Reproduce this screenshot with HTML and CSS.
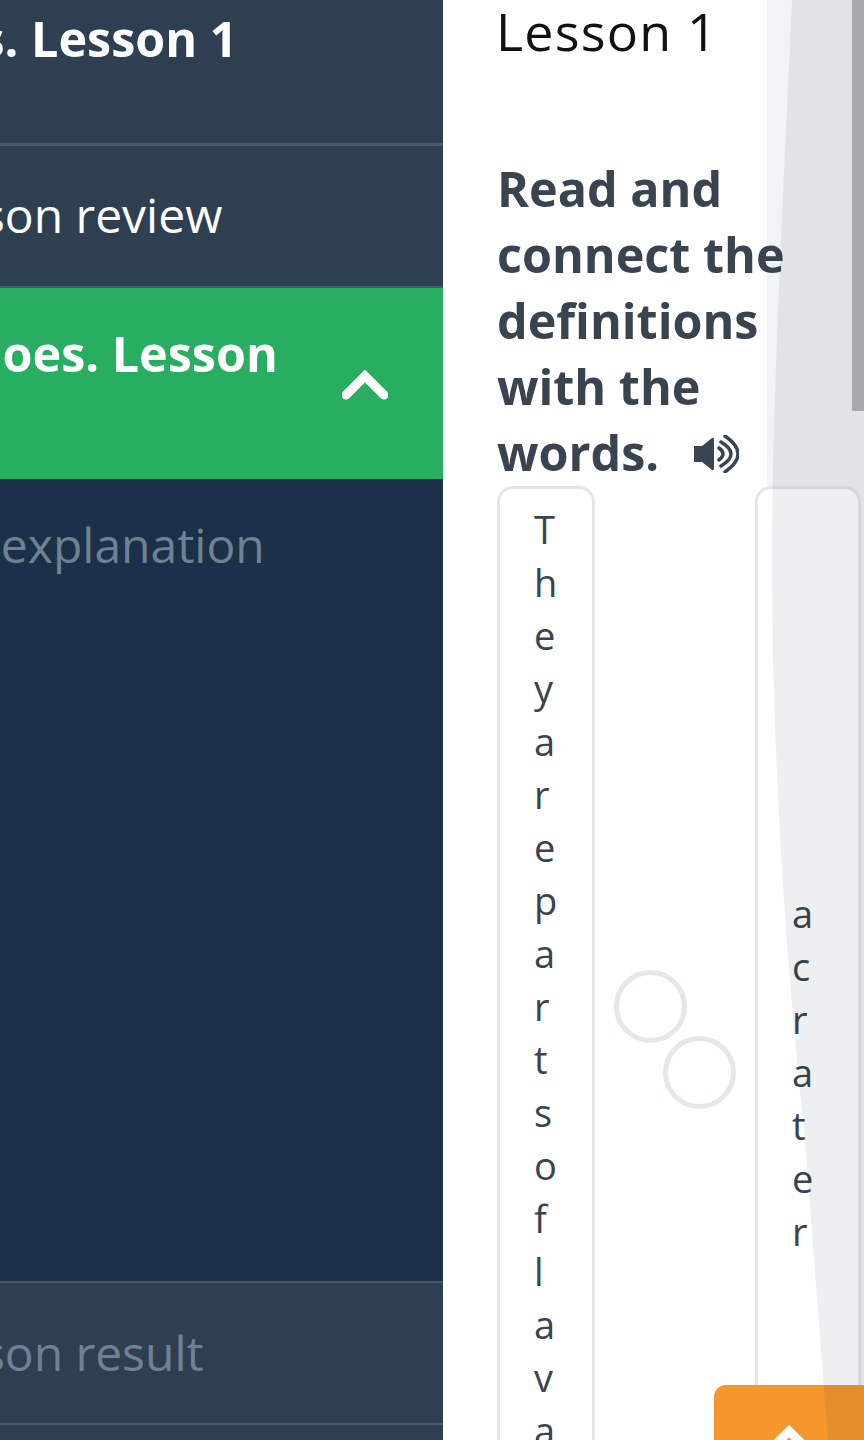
FILE: index.html
```html
<!DOCTYPE html>
<html lang="en">
  <head>
    <meta charset="UTF-8" />
    <title>Heroes. Lesson 1</title>
    <link rel="stylesheet" href="styles.css">
  </head>
  <body>
    <div class="page">
      <nav class="side">
        <div class="side-title"><span>Heroes. Lesson 1</span></div>
        <div class="side-row"><span>Lesson review</span></div>
        <div class="side-active">
          <span>Volcanoes. Lesson 1</span>
          <svg class="side-caret" width="46" height="30" viewBox="0 0 46 30">
            <path d="M4 25 L23 6 L42 25" />
          </svg>
        </div>
        <div class="side-sub">
          <span class="side-sub-link">Theory explanation</span>
        </div>
        <div class="side-row side-row-off"><span>Lesson result</span></div>
        <div class="side-row side-row-last"></div>
      </nav>
      <main class="content">
        <h1 class="lesson-title">Lesson 1</h1>
        <h2 class="task-title">
          Read and connect the definitions with the words.
          <svg class="sound-icon" width="46" height="38" viewBox="0 0 46 38">
            <path class="sound-body" d="M1 11 H9 L19 3 Q21 2 21 5 V33 Q21 36 19 35 L9 27 H1 Z" />
            <path class="sound-wave" d="M26 13 Q34 19 26 25 M28 7 Q48 19 28 31 M32 1 Q58 19 32 37" />
          </svg>
        </h2>
        <div class="match">
          <div class="match-card match-left">They are parts of lava that fly out</div>
          <div class="match-dots">
            <span class="dot dot-a"></span>
            <span class="dot dot-b"></span>
          </div>
          <div class="match-card match-right">a crater</div>
        </div>
      </main>
      <div class="up-btn">
        <svg width="46" height="30" viewBox="0 0 46 30">
          <path d="M4 25 L23 6 L42 25" />
        </svg>
      </div>
      <!-- soft grey shape lying over the right edge -->
      <svg class="shade" width="98" height="1440" viewBox="0 0 98 1440">
        <path d="M26 0 C18 180 6 400 6 560 C6 760 20 960 38 1130 C46 1230 54 1340 62 1440 H98 V0 Z" />
      </svg>
      <div class="scroll-thumb"></div>
    </div>
  </body>
</html>
```

FILE: styles.css
```css
html,
body {
  margin: 0;
  height: 1440px;
  overflow: hidden;
}
.page {
  position: relative;
  display: flex;
  height: 1440px;
  overflow: hidden;
  background: #f0f4f6;
  font-family: "Open Sans", "Liberation Sans", sans-serif;
}
.side {
  display: flex;
  flex-direction: column;
  flex: none;
  width: 443px;
  overflow: hidden;
  background: #1c3049;
  font-size: 48px;
  line-height: 66px;
}
.side span {
  white-space: nowrap;
}
.side-title {
  height: 143px;
  background: #2f3f52;
  border-bottom: 3px solid #46596b;
  color: #fff;
  font-size: 48.5px;
  font-weight: 700;
}
.side-title span {
  display: block;
  margin-left: -166px;
  margin-top: 5px;
}
.side-row {
  display: flex;
  align-items: center;
  height: 140px;
  background: #2f3f52;
  border-bottom: 2px solid #46596b;
  color: #fff;
}
.side-row span {
  margin-left: -93px;
  margin-top: -3px;
}
.side-row-off {
  color: #6f8293;
  border-top: 2px solid #46596b;
}
.side-row-off span {
  margin-top: -1px;
}
.side-row-last {
  flex: 1;
  border-bottom: 0;
}
.side-active {
  display: flex;
  align-items: center;
  justify-content: space-between;
  box-sizing: border-box;
  height: 191px;
  padding-right: 55px;
  background: #27ae60;
  color: #fff;
  font-size: 48.5px;
  font-weight: 700;
}
.side-active span {
  display: block;
  width: 470px;
  margin-left: -160px;
  margin-top: 5px;
  white-space: normal;
}
.side-caret {
  flex: none;
  margin-top: 3px;
}
.side-caret path,
.up-btn path {
  fill: none;
  stroke: #fff;
  stroke-width: 9;
  stroke-linecap: round;
}
.side-sub {
  height: 769px;
  padding-top: 33px;
  color: #6f8293;
}
.side-sub-link {
  display: block;
  margin-left: -167px;
}
.content {
  flex: none;
  box-sizing: border-box;
  width: 324px;
  padding-left: 55px;
  background: #fff;
  color: #3a4350;
}
.lesson-title {
  width: 300px;
  margin: -2px 0 0 -2px;
  font-size: 52px;
  line-height: 66px;
  font-weight: 400;
  letter-spacing: 1.2px;
  color: #111;
}
.task-title {
  width: 300px;
  margin: 91px 0 0 -1px;
  font-size: 48.5px;
  line-height: 66px;
  font-weight: 700;
}
.sound-icon {
  margin-left: 21px;
  vertical-align: -2px;
}
.sound-body {
  fill: #3a4350;
}
.sound-wave {
  fill: none;
  stroke: #3a4350;
  stroke-width: 3.5;
  stroke-linecap: round;
}
.match {
  display: flex;
  width: 364px;
  margin: 1px 0 0 -1px;
}
.match-card {
  flex: none;
  box-sizing: border-box;
  display: flex;
  height: 1173px;
  border: 3px solid #e3e6e8;
  border-radius: 16px;
  background: #fff;
  font-size: 38px;
  line-height: 53px;
  word-break: break-all;
}
.match-left {
  width: 98px;
  padding: 14px 33px 0 34px;
  align-items: flex-start;
}
.match-right {
  width: 106px;
  padding: 0 42px 0 34px;
  align-items: center;
}
.match-dots {
  flex: none;
  display: flex;
  flex-direction: column;
  justify-content: center;
  width: 160px;
  height: 1173px;
}
.dot {
  display: block;
  box-sizing: border-box;
  width: 73px;
  height: 73px;
  border: 5px solid #e4e8eb;
  border-radius: 50%;
}
.dot-a {
  margin-left: 19px;
}
.dot-b {
  margin: -7px 0 66px 68px;
}
.up-btn {
  position: absolute;
  left: 714px;
  top: 1385px;
  display: flex;
  justify-content: center;
  width: 150px;
  height: 80px;
  padding-top: 40px;
  border-radius: 12px 0 0 0;
  background: #f6972d;
  box-sizing: border-box;
}
.shade {
  position: absolute;
  right: 0;
  top: 0;
  pointer-events: none;
}
.shade path {
  fill: rgba(30, 40, 60, 0.075);
}
.scroll-thumb {
  position: absolute;
  right: 0;
  top: 0;
  width: 12px;
  height: 411px;
  background: #a8a9ab;
}
```
